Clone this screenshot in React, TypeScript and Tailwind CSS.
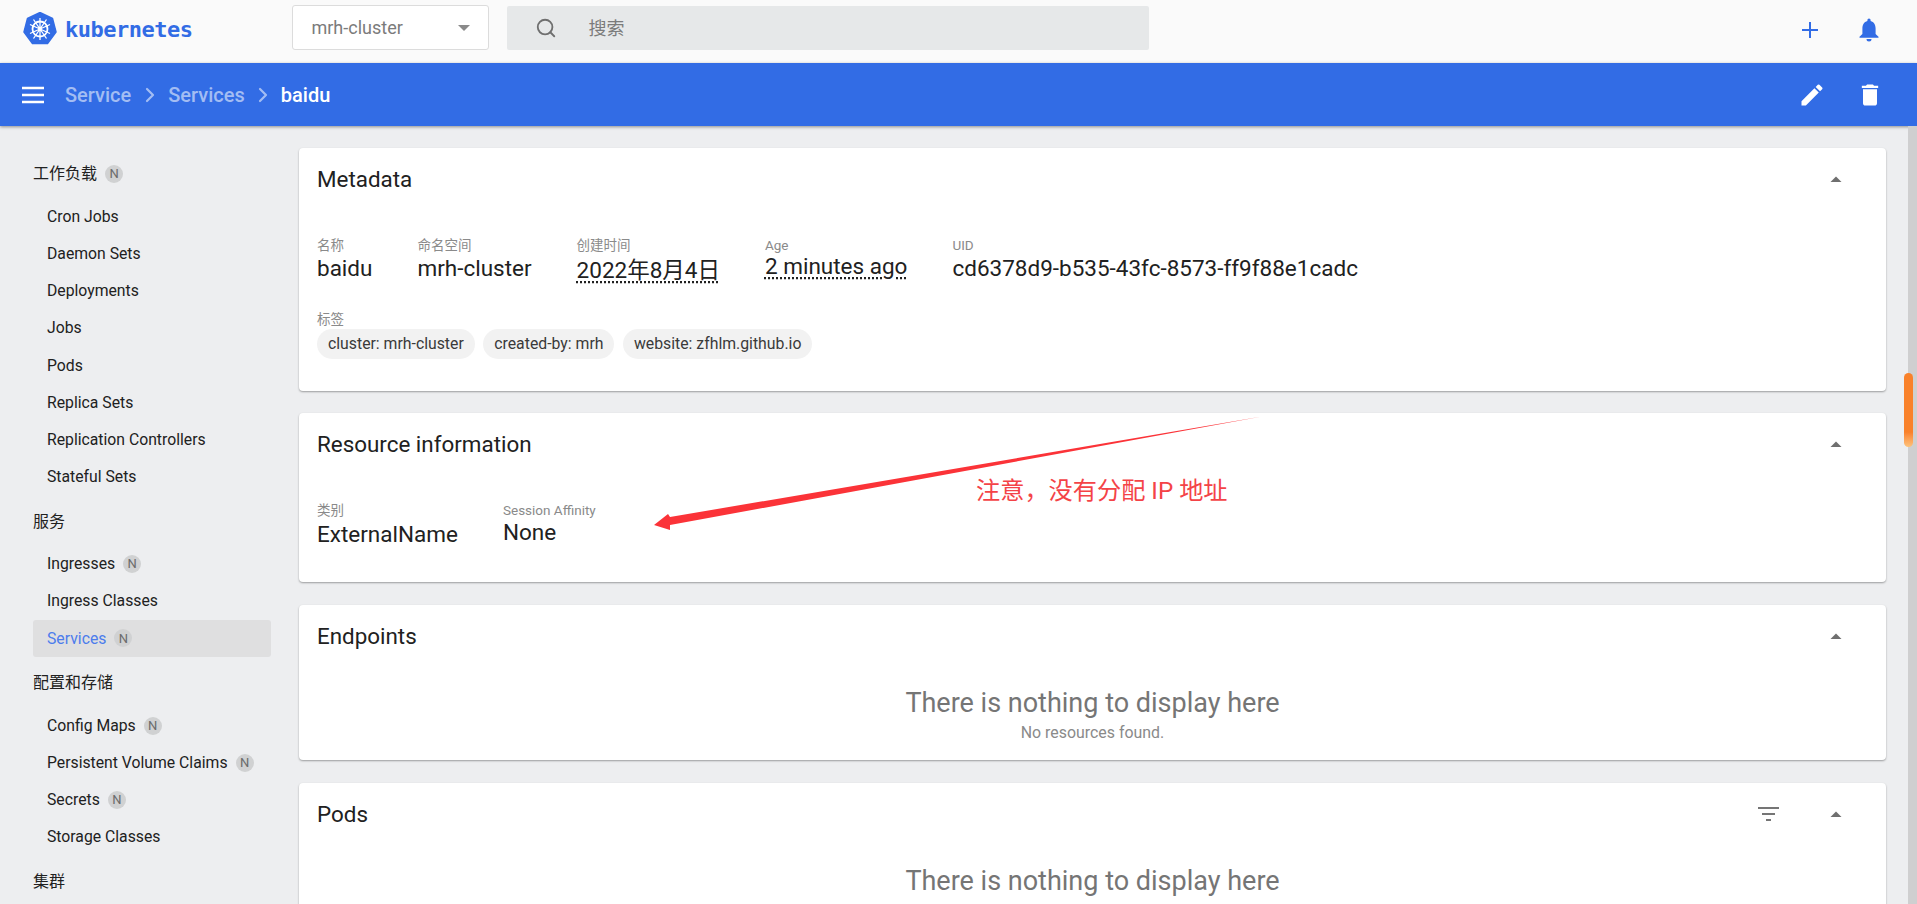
import { ChevronRight, Search } from 'lucide-react'

const FONT = "font-['Roboto','Noto_Sans_CJK_SC',sans-serif]"

interface NavItem {
  label: string
  badge?: boolean
  active?: boolean
}

const navGroups: { title: string; badge?: boolean; items: NavItem[] }[] = [
  {
    title: '工作负载',
    badge: true,
    items: [
      { label: 'Cron Jobs' },
      { label: 'Daemon Sets' },
      { label: 'Deployments' },
      { label: 'Jobs' },
      { label: 'Pods' },
      { label: 'Replica Sets' },
      { label: 'Replication Controllers' },
      { label: 'Stateful Sets' },
    ],
  },
  {
    title: '服务',
    items: [
      { label: 'Ingresses', badge: true },
      { label: 'Ingress Classes' },
      { label: 'Services', badge: true, active: true },
    ],
  },
  {
    title: '配置和存储',
    items: [
      { label: 'Config Maps', badge: true },
      { label: 'Persistent Volume Claims', badge: true },
      { label: 'Secrets', badge: true },
      { label: 'Storage Classes' },
    ],
  },
  { title: '集群', items: [] },
]

function Badge() {
  return (
    <span className="ml-2 flex h-[18px] w-[18px] items-center justify-center rounded-full bg-[#d0d1d2] text-[13px] text-[#6b6b6b]">
      N
    </span>
  )
}

function Logo() {
  return (
    <svg width="34" height="34" viewBox="0 0 34 34">
      <path d="M17 0.5 L29.5 6.5 L33 20 L24.5 31.5 L9.5 31.5 L1 20 L4.5 6.5 Z" fill="#326ce5" stroke="#326ce5" strokeLinejoin="round" strokeWidth="1.5" />
      <g stroke="#fff" fill="none" strokeWidth="1.5">
        <circle cx="17" cy="17" r="7.5" strokeWidth="1.8" />
        <path d="M17 6v22M7 12.5l20 9M27 12.5l-20 9M10.5 7.5l13 19M23.5 7.5l-13 19" strokeWidth="1.3" />
      </g>
      <circle cx="17" cy="17" r="2" fill="#fff" />
    </svg>
  )
}

function CollapseArrow() {
  return (
    <svg width="12" height="6" viewBox="0 0 12 6">
      <path d="M0.5 6 L6 0.5 L11.500 6 Z" fill="#6f6f6f" />
    </svg>
  )
}

function Field({
  label,
  value,
  dotted,
  labelClass = 'h-[16px]',
  valueClass = 'mt-[2px]',
}: {
  label: string
  value: string
  dotted?: boolean
  labelClass?: string
  valueClass?: string
}) {
  return (
    <div className="mr-[45px]">
      <div className={`${labelClass} text-[13.5px] leading-[16px] text-[#8a8a8a]`}>{label}</div>
      <div
        className={
          dotted
            ? `${valueClass} text-[22.5px] leading-[26px] text-[#212121] underline decoration-dotted decoration-[#212121] underline-offset-[3px]`
            : `${valueClass} text-[22.5px] leading-[26px] text-[#212121]`
        }
      >
        {value}
      </div>
    </div>
  )
}

function Chip({ text }: { text: string }) {
  return (
    <span className="mr-[8.500px] flex h-[30px] items-center rounded-full bg-[#f2f2f2] px-[11px] text-[15.800px] text-[#3a3a3a]">
      {text}
    </span>
  )
}

function CardHeader({ title, filter }: { title: string; filter?: boolean }) {
  return (
    <div className="flex h-[62px] items-center justify-between pl-[18px] pr-[44px]">
      <span className="mt-[2px] text-[22.400px] text-[#212121]">{title}</span>
      <div className="flex items-center">
        {filter && (
          <svg className="mr-[51px]" width="21" height="14" viewBox="0 0 21 14">
            <path d="M0 1h21M4 7h13M8 13h5" stroke="#757575" strokeWidth="2" />
          </svg>
        )}
        <CollapseArrow />
      </div>
    </div>
  )
}

function EmptyState({ hint }: { hint?: boolean }) {
  return (
    <div className="flex flex-col items-center">
      <div className="text-[27px] leading-[34px] text-[#757575]">There is nothing to display here</div>
      {hint && <div className="mt-[4px] text-[15.900px] leading-[18px] text-[#8a8a8a]">No resources found.</div>}
    </div>
  )
}

export default function App() {
  return (
    <div className={`${FONT} relative h-[904px] overflow-hidden bg-[#edeef0]`}>
      {/* top bar */}
      <div className="flex h-[63px] items-center bg-[#fafafa]">
        <div className="ml-[23px] mt-[-5px] flex items-center">
          <Logo />
          <span className="ml-[8px] font-['DejaVu_Sans_Mono',monospace] text-[22px] font-bold tracking-[-0.5px] text-[#326ce5]">
            kubernetes
          </span>
        </div>
        <div className="ml-[100px] mt-[-8px] flex h-[45px] w-[197px] items-center justify-between rounded-[3px] border border-[#dcdcdc] bg-white pl-[18px] pr-[18px]">
          <span className="text-[18px] text-[#7b7b7b]">mrh-cluster</span>
          <svg width="12" height="6" viewBox="0 0 12 6">
            <path d="M0 0h12L6 6z" fill="#8a8a8a" />
          </svg>
        </div>
        <div className="ml-[18px] mt-[-7px] flex h-[44px] w-[642px] items-center rounded-[2px] bg-[#e6e8e9] pl-[28px]">
          <Search size={22} strokeWidth={2} className="text-[#6f6f6f]" />
          <span className="ml-[31px] text-[18px] text-[#7b7b7b]">搜索</span>
        </div>
        <div className="ml-auto mr-[38px] mt-[-3px] flex items-center">
          <svg width="16" height="16" viewBox="0 0 16 16">
            <path d="M8 0v16M0 8h16" stroke="#326ce5" strokeWidth="2" />
          </svg>
          <svg className="ml-[41px]" width="20" height="24" viewBox="0 0 20 24">
            <path
              d="M10 0.5a1.6 1.6 0 0 1 1.6 1.6v.9C15 3.900 16.600 6.900 16.600 10.500v5.500l2.900 2.800v1H.500v-1l2.900-2.800v-5.500C3.400 6.900 5 3.900 8.400 3v-.9A1.600 1.600 0 0 1 10 .500zM7.500 21h5a2.500 2.500 0 0 1-5 0z"
              fill="#326ce5"
            />
          </svg>
        </div>
      </div>

      {/* blue toolbar */}
      <div className="flex h-[63px] items-center bg-[#326ce5] shadow-[0_1px_3px_rgba(0,0,0,0.4)]">
        <svg className="ml-[22px]" width="22" height="18" viewBox="0 0 22 18">
          <path d="M0 2h22M0 9h22M0 16h22" stroke="#fff" strokeWidth="2.600" />
        </svg>
        <span className="ml-[21px] text-[20px] font-medium text-[#a3bdf3]">Service</span>
        <ChevronRight size={24} strokeWidth={2.2} className="mx-[6.500px] text-[#a3bdf3]" />
        <span className="text-[20px] font-medium text-[#a3bdf3]">Services</span>
        <ChevronRight size={24} strokeWidth={2.2} className="mx-[6px] text-[#a3bdf3]" />
        <span className="text-[20px] font-medium text-white">baidu</span>
        <div className="ml-auto mr-[33px] flex items-center">
          <svg width="28" height="28" viewBox="0 0 24 24">
            <path
              d="M3 17.250V21h3.750L17.810 9.940l-3.750-3.750L3 17.250zM20.710 7.040a1 1 0 0 0 0-1.410l-2.340-2.340a1 1 0 0 0-1.410 0l-1.830 1.830 3.750 3.750 1.830-1.830z"
              fill="#fff"
            />
          </svg>
          <svg className="ml-[30px]" width="28" height="28" viewBox="0 0 24 24">
            <path d="M6 19c0 1.100.9 2 2 2h8c1.100 0 2-.9 2-2V7H6v12zM19 4h-3.500l-1-1h-5l-1 1H5v2h14V4z" fill="#fff" />
          </svg>
        </div>
      </div>

      <div className="flex">
        {/* sidebar */}
        <aside className="w-[299px] shrink-0 pl-[33px] pt-[36px] text-[#212121]">
          {navGroups.map((group) => (
            <div key={group.title} className="mb-[14px] w-[238px]">
              <div className="mb-[12px] flex h-[24px] items-center text-[16px]">
                {group.title}
                {group.badge && <Badge />}
              </div>
              {group.items.map((item) => (
                <div
                  key={item.label}
                  className={
                    item.active
                      ? 'flex h-[37.200px] items-center rounded-[3px] bg-[#dfdfe0] pl-[14px] text-[15.750px] text-[#4c7cec]'
                      : 'flex h-[37.200px] items-center pl-[14px] text-[15.750px] text-[#212121]'
                  }
                >
                  {item.label}
                  {item.badge && <Badge />}
                </div>
              ))}
            </div>
          ))}
        </aside>

        {/* main column */}
        <main className="mr-[31px] flex-1 pt-[22px]">
          <section className="mb-[22px] h-[243px] rounded-[4px] bg-white shadow-[0_1px_2px_rgba(0,0,0,0.35)]">
            <CardHeader title="Metadata" />
            <div className="flex pl-[18px] pt-[27px]">
              <Field label="名称" value="baidu" />
              <Field label="命名空间" value="mrh-cluster" />
              <Field label="创建时间" value="2022年8月4日" dotted valueClass="mt-[4px]" />
              <Field label="Age" value="2 minutes ago" dotted labelClass="h-[15px]" valueClass="mt-[1px]" />
              <Field label="UID" value="cd6378d9-b535-43fc-8573-ff9f88e1cadc" />
            </div>
            <div className="pl-[18px] pt-[28px]">
              <div className="text-[13.500px] leading-[16px] text-[#8a8a8a]">标签</div>
              <div className="mt-[2px] flex">
                <Chip text="cluster: mrh-cluster" />
                <Chip text="created-by: mrh" />
                <Chip text="website: zfhlm.github.io" />
              </div>
            </div>
          </section>

          <section className="mb-[23px] h-[169px] rounded-[4px] bg-white shadow-[0_1px_2px_rgba(0,0,0,0.35)]">
            <CardHeader title="Resource information" />
            <div className="flex pl-[18px] pt-[27px]">
              <Field label="类别" value="ExternalName" valueClass="mt-[3px]" />
              <Field label="Session Affinity" value="None" valueClass="mt-[1px]" />
            </div>
          </section>

          <section className="mb-[23px] h-[155px] rounded-[4px] bg-white shadow-[0_1px_2px_rgba(0,0,0,0.35)]">
            <CardHeader title="Endpoints" />
            <div className="pt-[19px]">
              <EmptyState hint />
            </div>
          </section>

          <section className="h-[200px] rounded-[4px] bg-white shadow-[0_1px_2px_rgba(0,0,0,0.35)]">
            <CardHeader title="Pods" filter />
            <div className="pt-[19px]">
              <EmptyState />
            </div>
          </section>
        </main>
      </div>

      {/* scrollbar */}
      <div className="absolute bottom-0 right-0 top-[126px] w-[9px] bg-[#cfcfd0]" />
      <div className="absolute left-[1904px] top-[373px] h-[74px] w-[9px] rounded-full bg-gradient-to-b from-[#f9812a] from-80% to-[#fdc27a]" />

      {/* annotation */}
      <svg className="absolute left-0 top-0" width="1917" height="904" viewBox="0 0 1917 904">
        <path d="M1262 416.500 L670 517 L668 514 L654 525 L670 530 L670 525 Z" fill="#fb3338" />
      </svg>
      <span className="absolute left-[976px] top-[476px] text-[24.200px] leading-[30px] text-[#f44347]">注意，没有分配 IP 地址</span>
    </div>
  )
}
